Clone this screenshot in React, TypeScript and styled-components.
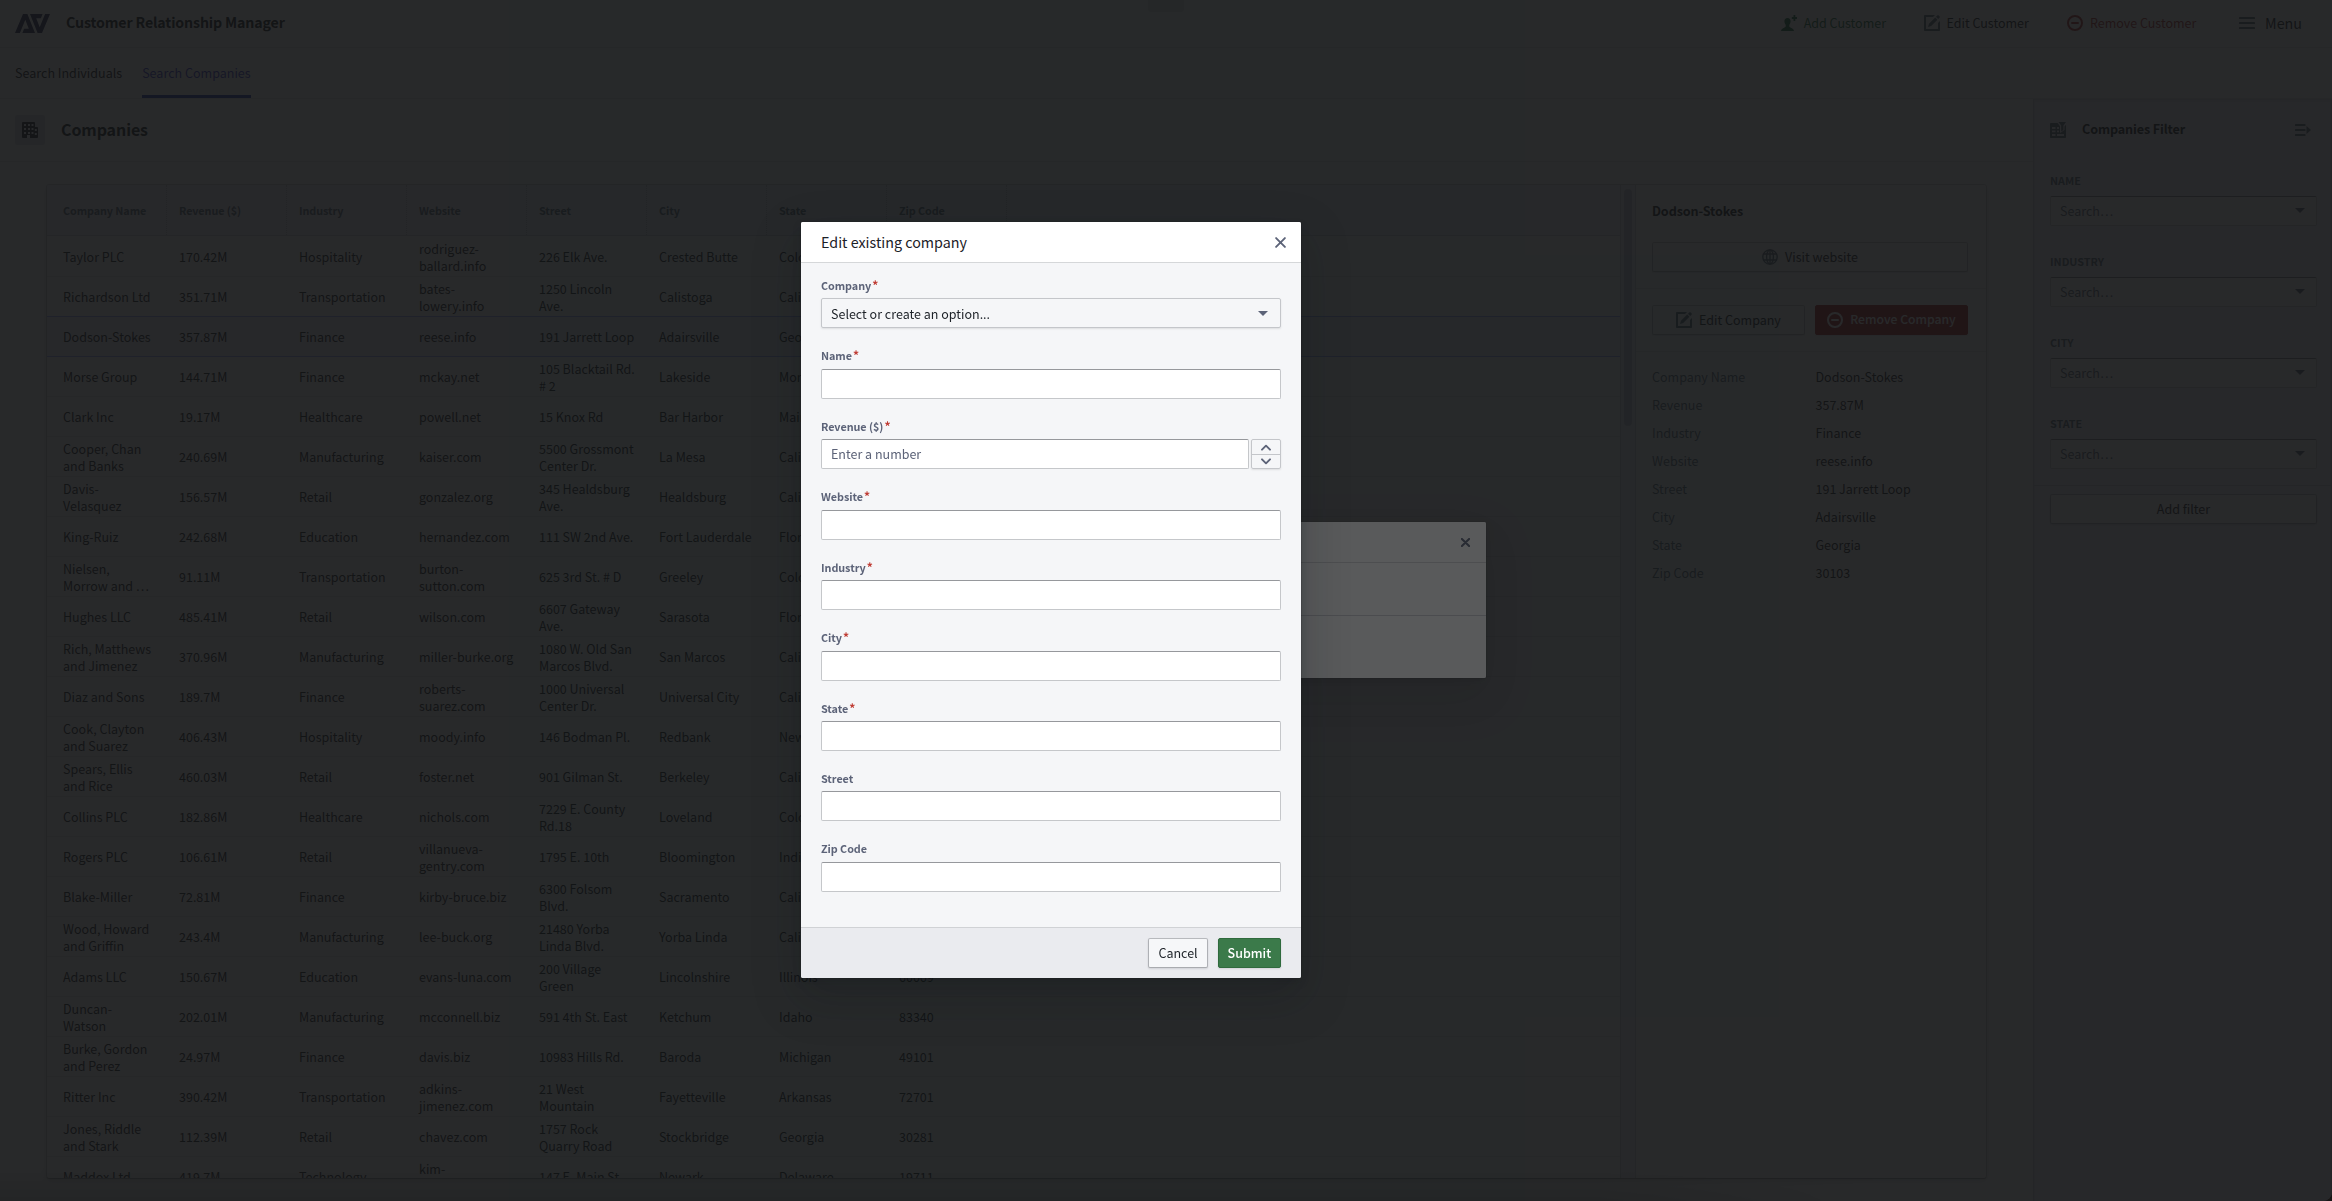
import React from "react";
import styled, { createGlobalStyle, css } from "styled-components";

const ink = "#1c2127";
const muted = "#5f6b7c";
const line = "rgba(17, 20, 24, 0.13)";
const shade = "#f2f2fc";

const GlobalStyle = createGlobalStyle`
  *, *::before, *::after { box-sizing: border-box; }
  body {
    margin: 0;
    overflow: hidden;
    background: #4a2418;
    color: ${ink};
    font-family: "Noto Sans CJK SC", "Noto Sans", sans-serif;
    font-size: 12.5px;
    line-height: 17px;
  }
`;

/* ---------- page shell ---------- */

const Page = styled.div`
  display: flex;
  flex-direction: column;
  height: 1201px;
  background: #fff;
  border-bottom-right-radius: 9px;
  overflow: hidden;
`;

const TopBar = styled.header`
  display: flex;
  align-items: center;
  height: 48px;
  padding: 0 30px 1px 15px;
  border-bottom: 1px solid ${line};
`;

const AppTitle = styled.h1`
  flex: 1;
  margin: 0 0 0 16px;
  padding-bottom: 2px;
  font-size: 14.2px;
  font-weight: 700;
  letter-spacing: -0.14px;
`;

const TopAction = styled.div<{ $tone?: string; $gap: number; $large?: boolean }>`
  display: flex;
  align-items: center;
  gap: ${(p) => (p.$large ? 10 : 7)}px;
  margin-left: ${(p) => p.$gap}px;
  color: ${(p) => p.$tone || ink};
  font-size: ${(p) => (p.$large ? 14.3 : 12.5)}px;
`;

const Lift = styled.span<{ $by?: number }>`
  padding-bottom: ${(p) => p.$by ?? 2}px;
`;

const Tabs = styled.nav`
  display: flex;
  gap: 20px;
  height: 51px;
  padding: 0 15px;
  border-bottom: 1px solid ${line};
`;

const Tab = styled.div<{ $active?: boolean }>`
  height: 50px;
  line-height: 49px;
  font-size: 12.54px;
  ${(p) =>
    p.$active &&
    css`
      color: #3c3ccf;
      border-bottom: 3px solid #2038b0;
    `}
`;

const Body = styled.div`
  display: flex;
  flex: 1;
  min-height: 0;
`;

const Main = styled.main`
  display: flex;
  flex-direction: column;
  width: 2033px;
`;

const SectionBar = styled.div`
  display: flex;
  align-items: center;
  gap: 16px;
  height: 63px;
  padding: 0 15px 0;
  border-bottom: 1px solid ${line};
`;

const IconTile = styled.div`
  display: flex;
  align-items: center;
  justify-content: center;
  width: 30px;
  height: 30px;
  border-radius: 2px;
  background: #dcdce6;
`;

const SectionTitle = styled.h2`
  margin: 0;
  padding-bottom: 2px;
  font-size: 16px;
  font-weight: 700;
  letter-spacing: -0.1px;
`;

const Card = styled.section`
  display: flex;
  width: 1939px;
  height: 993px;
  margin: 23px 0 0 47px;
  border-radius: 2px;
  box-shadow: 0 0 0 1px rgba(17, 20, 24, 0.15), 0 1px 1px rgba(17, 20, 24, 0.2), 0 2px 6px rgba(17, 20, 24, 0.2);
  overflow: hidden;
`;

/* ---------- table ---------- */

const Table = styled.div`
  width: 1573px;
  overflow: hidden;
`;

const columns = "repeat(8, 120px)";

const HeadRow = styled.div`
  display: grid;
  grid-template-columns: ${columns};
  height: 51px;
  background: ${shade};
  border-bottom: 1px solid ${line};
`;

const HeadCell = styled.div`
  display: flex;
  align-items: center;
  padding: 0 0 0 12px;
  border-right: 1px dotted rgba(17, 20, 24, 0.2);
  color: ${muted};
  font-size: 10.8px;
  font-weight: 700;
  letter-spacing: -0.08px;
  white-space: nowrap;
  &:first-child { padding-left: 16px; }
`;

const Row = styled.div<{ $selected?: boolean }>`
  display: grid;
  grid-template-columns: ${columns};
  height: 40px;
  border-bottom: 1px solid ${line};
  &:nth-child(2) { height: 41px; padding-top: 1px; }
  ${(p) =>
    p.$selected &&
    css`
      background: ${shade};
      border-bottom-color: #98a8ff;
      box-shadow: 0 -1px 0 #98a8ff;
    `}
`;

const Cell = styled.div`
  display: flex;
  align-items: center;
  padding: 0 0 0 12px;
  white-space: pre;
  &:first-child { padding-left: 16px; }
`;

const ScrollGutter = styled.div`
  width: 16px;
  padding: 4px 4px 0 3px;
  background: ${shade};
  border-left: 1px solid ${line};
  border-right: 1px solid ${line};
`;

const ScrollThumb = styled.div`
  width: 8px;
  height: 237px;
  border-radius: 4px;
  background: #c9c9d6;
`;

/* ---------- detail panel ---------- */

const Detail = styled.aside`
  flex: 1;
`;

const DetailSection = styled.div<{ $h: number }>`
  display: flex;
  align-items: flex-end;
  gap: 10px;
  height: ${(p) => p.$h}px;
  padding: 0 18px 16px 16px;
  border-bottom: 1px solid ${line};
`;

const DetailTitle = styled.h3`
  margin: 0;
  padding: 17px 16px 0;
  height: 41px;
  font-size: 12.6px;
  font-weight: 700;
  letter-spacing: -0.12px;
`;

const Button = styled.button<{ $kind?: "danger" | "success"; $pad?: number; $grow?: boolean }>`
  display: flex;
  align-items: center;
  justify-content: center;
  gap: 7px;
  height: 30px;
  flex: ${(p) => (p.$grow ? "1 1 0" : "none")};
  padding: 0 ${(p) => p.$pad ?? 0}px;
  border: 1px solid rgba(17, 20, 24, 0.2);
  border-radius: 2px;
  background: #f6f7f9;
  background-clip: padding-box;
  box-shadow: 0 1px 2px rgba(17, 20, 24, 0.12);
  color: ${ink};
  font: inherit;
  white-space: nowrap;
  ${(p) =>
    p.$kind === "success" &&
    css`
      background: #3b7a4a;
      border-color: #2f6a3d;
      color: #fff;
      font-weight: 500;
    `}
  ${(p) =>
    p.$kind === "danger" &&
    css`
      background: #a5242a;
      border-color: #a5242a;
      color: #fff;
      font-weight: 500;
      font-size: 12.2px;
    `}
`;

const Facts = styled.dl`
  display: grid;
  grid-template-columns: 163.5px 1fr;
  grid-auto-rows: 28px;
  align-items: center;
  margin: 10.4px 0 0 16px;
  dt { color: ${muted}; }
  dd { margin: 0; }
`;

/* ---------- filter sidebar ---------- */

const Sidebar = styled.aside`
  flex: 1;
  background: ${shade};
  border-left: 1px solid ${line};
  border-right: 1px solid ${line};
  box-shadow: inset 0 2px 3px rgba(17, 20, 24, 0.1);
`;

const SidebarHead = styled.div`
  display: flex;
  align-items: center;
  height: 61px;
  padding: 0 20px 0 16px;
  color: ${muted};
`;

const SidebarTitle = styled.h3`
  flex: 1;
  margin: 0 0 0 16px;
  padding-bottom: 2px;
  color: ${ink};
  font-size: 12.6px;
  font-weight: 700;
  letter-spacing: -0.12px;
`;

const FilterField = styled.div`
  height: 81px;
  padding: 13px 14px 0 16px;
`;

const FilterLabel = styled.div`
  height: 23px;
  color: ${muted};
  font-size: 10.8px;
  font-weight: 700;
  line-height: 15px;
`;

const SearchBox = styled.div`
  display: flex;
  align-items: center;
  justify-content: space-between;
  height: 30px;
  padding: 0 11px 1px 9px;
  border: 1px solid rgba(17, 20, 24, 0.2);
  border-top-color: rgba(17, 20, 24, 0.5);
  border-radius: 2px;
  background: #fff;
  color: ${muted};
`;

const Filters = styled.div`
  height: 326px;
  border-bottom: 1px solid ${line};
`;

const AddFilter = styled.div`
  display: flex;
  padding: 8px 14px 8px 16px;
`;

const Caret = styled.span`
  width: 0;
  height: 0;
  border: 5px solid transparent;
  border-top: 5px solid #5c6378;
  border-bottom: 0;
`;

/* ---------- overlays ---------- */

const Notch = styled.div`
  position: absolute;
  top: 0;
  left: 1148px;
  width: 36px;
  height: 12px;
  border-radius: 0 0 3px 3px;
  background: rgba(17, 20, 24, 0.12);
`;

const BottomFade = styled.div`
  position: absolute;
  left: 0;
  top: 1166px;
  width: 1880px;
  height: 35px;
  background: linear-gradient(to bottom, transparent, rgba(17, 20, 24, 0.2));
  mask-image: linear-gradient(to right, #000 85%, transparent);
`;

const Backdrop = styled.div<{ $shift?: number }>`
  position: fixed;
  inset: 0;
  display: flex;
  align-items: center;
  justify-content: center;
  padding: 0 ${(p) => p.$shift ?? 0}px 1px 0;
  background: rgba(19, 20, 21, 0.7);
`;

const Dialog = styled.div<{ $w: number; $h: number; $soft?: boolean }>`
  display: flex;
  flex-direction: column;
  width: ${(p) => p.$w}px;
  height: ${(p) => p.$h}px;
  border-radius: 2px;
  background: #f5f6f8;
  box-shadow: ${(p) =>
    p.$soft
      ? "0 0 0 1px rgba(17, 20, 24, 0.1), 0 4px 8px rgba(17, 20, 24, 0.15), 0 18px 46px 6px rgba(17, 20, 24, 0.12)"
      : "0 0 0 1px rgba(17, 20, 24, 0.1), 0 4px 8px rgba(17, 20, 24, 0.2), 0 18px 46px 6px rgba(17, 20, 24, 0.2)"};
  overflow: hidden;
`;

const DialogHead = styled.div<{ $end: number }>`
  display: flex;
  align-items: center;
  justify-content: space-between;
  height: 41px;
  padding: 0 ${(p) => p.$end}px 0 20px;
  border-bottom: 1px solid #d5d7d9;
  background: #fff;
  font-size: 14.3px;
`;

const QuietStrip = styled.div`
  height: 53px;
  border-bottom: 1px solid #cfd1d6;
  background: #fff;
`;

const QuietRest = styled.div`
  flex: 1;
  background: #fdfdff;
`;

const Form = styled.div`
  flex: 1;
  padding: 15px 20px 0;
`;

const Field = styled.div`
  height: 70.43px;
`;

const Label = styled.label`
  display: flex;
  height: 20.43px;
  color: #5c6378;
  font-size: 10.8px;
  font-weight: 700;
  letter-spacing: -0.05px;
  line-height: 15.43px;
`;

const Required = styled.span`
  margin: -1px 0 0 1px;
  color: #bf3b33;
  font-size: 12px;
`;

const Input = styled.div`
  display: flex;
  align-items: center;
  flex: 1;
  height: 30px;
  padding: 0 9px 1px;
  border: 1px solid #c5c7ca;
  border-top-color: #96989c;
  border-radius: 2px;
  background: #fff;
  color: #5c6378;
`;

const Select = styled.div`
  display: flex;
  align-items: center;
  justify-content: space-between;
  height: 30px;
  padding: 0 12px 0 9px;
  border: 1px solid #c4c6ca;
  border-radius: 2px;
  background: #f5f6f8;
  box-shadow: 0 1px 2px rgba(17, 20, 24, 0.1);
`;

const NumberRow = styled.div`
  display: flex;
  gap: 2px;
`;

const Stepper = styled.div`
  display: grid;
  grid-template-rows: 15px 1fr;
  width: 30px;
  height: 30px;
  border: 1px solid #c4c6ca;
  border-radius: 2px;
  box-shadow: 0 1px 2px rgba(17, 20, 24, 0.1);
  svg { margin: auto; }
`;

const StepUp = styled.div`
  display: flex;
  border-bottom: 1px solid #c4c6ca;
`;

const StepDown = styled.div`
  display: flex;
`;

const DialogFoot = styled.div`
  display: flex;
  align-items: flex-start;
  justify-content: flex-end;
  gap: 10px;
  height: 51px;
  padding: 10px 20px 0;
  border-top: 1px solid #d0d2d5;
  background: #eaebef;
`;

/* ---------- icons ---------- */

const IconBox = styled.svg`
  flex: none;
  width: 16px;
  height: 16px;
`;

const Icon = ({ children, color = "currentColor" }: { children: React.ReactNode; color?: string }) => (
  <IconBox viewBox="0 0 16 16" fill={color}>
    {children}
  </IconBox>
);

const logoHalf = "M0 19 8 0h4.400L20 19H7.400l1.700-4.200h4.700L10.300 5.800 4.900 19z";

const Logo = () => (
  <svg width="35" height="19" viewBox="0 0 35 19" fill="#2b2d5c">
    <path d={logoHalf} />
    <path transform="rotate(180 17.5 9.5)" d={logoHalf} />
  </svg>
);

const PersonPlus = () => (
  <Icon color="#1c6e42">
    <path d="M12.500 0h1.800v2.100h1.700v1.800h-1.700V6h-1.800V3.900h-1.700V2.100h1.700z" />
    <path d="M6.500 3C4.500 3 3.300 4.500 3.400 6.400c.1 1.600.7 2.700 1.300 3.400v1.500c0 .7-.6 1-1.500 1.400C1.600 13.400.2 14 0 16h13c-.2-2-1.600-2.600-3.200-3.300-.9-.4-1.500-.7-1.500-1.400V9.800c.6-.7 1.200-1.800 1.300-3.400C9.700 4.500 8.500 3 6.500 3z" />
  </Icon>
);

const EditIcon = () => (
  <Icon color={muted}>
    <path d="M1 0C.4 0 0 .4 0 1v14c0 .6.4 1 1 1h14c.6 0 1-.4 1-1V6l-2 2v6H2V2h7l2-2z" />
    <path d="M4 12l1-3.200L11.200 2.600l2.200 2.200L7.200 11zM12 1.800 13.300.5c.4-.4 1-.4 1.400 0l.8.8c.4.4.4 1 0 1.400L14.200 4z" />
  </Icon>
);

const RemoveIcon = () => (
  <Icon>
    <path fillRule="evenodd" d="M8 0a8 8 0 1 0 0 16A8 8 0 0 0 8 0zm0 2a6 6 0 1 1 0 12A6 6 0 0 1 8 2z" />
    <rect x="4" y="7" width="8" height="2" rx="1" />
  </Icon>
);

const MenuIcon = () => (
  <Icon color={muted}>
    <rect y="2" width="16" height="2" rx=".6" />
    <rect y="7" width="16" height="2" rx=".6" />
    <rect y="12" width="16" height="2" rx=".6" />
  </Icon>
);

const windows: [number, number][] = [
  [2, 2], [6, 2], [9.500, 2],
  [2, 6], [6, 6], [9.500, 6],
  [2, 10], [6, 10], [9.500, 10],
  [12.800, 7], [12.800, 11],
];

const Building = () => (
  <Icon color="#20242c">
    <rect width="13" height="16" rx="1" />
    <rect x="7" y="5" width="9" height="11" rx="1" />
    {windows.map(([x, y]) => (
      <rect key={`${x}-${y}`} x={x} y={y} width="2" height="2" fill="#f0f0fa" />
    ))}
    <rect x="5" y="13" width="3" height="3" fill="#f0f0fa" />
  </Icon>
);

const TableFilter = () => (
  <Icon color={muted}>
    <path d="M8.500 0H16l-2.600 3.600V8l-2.200 1.600v-6z" />
    <path fillRule="evenodd" d="M1 1h6.600L10 4.200v6.800l4.500-3V4.600L16 2.800V15c0 .6-.4 1-1 1H1c-.6 0-1-.4-1-1V2c0-.6.400-1 1-1zm1 4v2h3.500V5zm5 0v2h2V5zM2 8.500v1.800h3.500V8.500zm5 0v1.800h2V8.500zM2 12v2h3.500v-2zm5 0v2h7v-2z" />
  </Icon>
);

const Collapse = () => (
  <Icon color={muted}>
    <rect y="2" width="10.500" height="2" rx=".6" />
    <rect y="7" width="10.500" height="2" rx=".6" />
    <rect y="12" width="10.500" height="2" rx=".6" />
    <path d="M11.500 4v8L16 8z" />
  </Icon>
);

const Globe = () => (
  <Icon color="none">
    <g stroke={muted} strokeWidth="1.300">
      <circle cx="8" cy="8" r="7.200" />
      <ellipse cx="8" cy="8" rx="3.400" ry="7.200" />
      <path d="M8 1v14M1.500 5h13M1.500 11h13" />
    </g>
  </Icon>
);

const Cross = ({ size, weight }: { size: number; weight: number }) => (
  <svg width={size} height={size} viewBox="0 0 10 10" stroke="#5c6378" strokeWidth={weight} strokeLinecap="round">
    <path d="M1 1l8 8M9 1l-8 8" />
  </svg>
);

const Chevron = ({ down }: { down?: boolean }) => (
  <svg width="10" height="7" viewBox="0 0 10 7" fill="none" stroke="#5c6378" strokeWidth="1.900" strokeLinecap="round" strokeLinejoin="round">
    <path d={down ? "M1 1.300 5 5.300l4-4" : "M1 5.700 5 1.700l4 4"} />
  </svg>
);

/* ---------- data ---------- */

const headers = ["Company Name", "Revenue ($)", "Industry", "Website", "Street", "City", "State", "Zip Code"];

const rows: string[][] = [
  ["Taylor PLC", "170.42M", "Hospitality", "rodriguez-\nballard.info", "226 Elk Ave.", "Crested Butte", "Colorado", ""],
  ["Richardson Ltd", "351.71M", "Transportation", "bates-\nlowery.info", "1250 Lincoln\nAve.", "Calistoga", "California", ""],
  ["Dodson-Stokes", "357.87M", "Finance", "reese.info", "191 Jarrett Loop", "Adairsville", "Georgia", "30103"],
  ["Morse Group", "144.71M", "Finance", "mckay.net", "105 Blacktail Rd.\n# 2", "Lakeside", "Montana", ""],
  ["Clark Inc", "19.17M", "Healthcare", "powell.net", "15 Knox Rd", "Bar Harbor", "Maine", ""],
  ["Cooper, Chan\nand Banks", "240.69M", "Manufacturing", "kaiser.com", "5500 Grossmont\nCenter Dr.", "La Mesa", "California", ""],
  ["Davis-\nVelasquez", "156.57M", "Retail", "gonzalez.org", "345 Healdsburg\nAve.", "Healdsburg", "California", ""],
  ["King-Ruiz", "242.68M", "Education", "hernandez.com", "111 SW 2nd Ave.", "Fort Lauderdale", "Florida", ""],
  ["Nielsen,\nMorrow and …", "91.11M", "Transportation", "burton-\nsutton.com", "625 3rd St. # D", "Greeley", "Colorado", ""],
  ["Hughes LLC", "485.41M", "Retail", "wilson.com", "6607 Gateway\nAve.", "Sarasota", "Florida", ""],
  ["Rich, Matthews\nand Jimenez", "370.96M", "Manufacturing", "miller-burke.org", "1080 W. Old San\nMarcos Blvd.", "San Marcos", "California", ""],
  ["Diaz and Sons", "189.7M", "Finance", "roberts-\nsuarez.com", "1000 Universal\nCenter Dr.", "Universal City", "California", ""],
  ["Cook, Clayton\nand Suarez", "406.43M", "Hospitality", "moody.info", "146 Bodman Pl.", "Redbank", "New Jersey", ""],
  ["Spears, Ellis\nand Rice", "460.03M", "Retail", "foster.net", "901 Gilman St.", "Berkeley", "California", ""],
  ["Collins PLC", "182.86M", "Healthcare", "nichols.com", "7229 E. County\nRd.18", "Loveland", "Colorado", ""],
  ["Rogers PLC", "106.61M", "Retail", "villanueva-\ngentry.com", "1795 E. 10th", "Bloomington", "Indiana", ""],
  ["Blake-Miller", "72.81M", "Finance", "kirby-bruce.biz", "6300 Folsom\nBlvd.", "Sacramento", "California", ""],
  ["Wood, Howard\nand Griffin", "243.4M", "Manufacturing", "lee-buck.org", "21480 Yorba\nLinda Blvd.", "Yorba Linda", "California", ""],
  ["Adams LLC", "150.67M", "Education", "evans-luna.com", "200 Village\nGreen", "Lincolnshire", "Illinois", "60069"],
  ["Duncan-\nWatson", "202.01M", "Manufacturing", "mcconnell.biz", "591 4th St. East", "Ketchum", "Idaho", "83340"],
  ["Burke, Gordon\nand Perez", "24.97M", "Finance", "davis.biz", "10983 Hills Rd.", "Baroda", "Michigan", "49101"],
  ["Ritter Inc", "390.42M", "Transportation", "adkins-\njimenez.com", "21 West\nMountain", "Fayetteville", "Arkansas", "72701"],
  ["Jones, Riddle\nand Stark", "112.39M", "Retail", "chavez.com", "1757 Rock\nQuarry Road", "Stockbridge", "Georgia", "30281"],
  ["Maddox Ltd", "419.7M", "Technology", "kim-\n ", "147 E. Main St.", "Newark", "Delaware", "19711"],
];

const facts: [string, string][] = [
  ["Company Name", "Dodson-Stokes"],
  ["Revenue", "357.87M"],
  ["Industry", "Finance"],
  ["Website", "reese.info"],
  ["Street", "191 Jarrett Loop"],
  ["City", "Adairsville"],
  ["State", "Georgia"],
  ["Zip Code", "30103"],
];

type FieldSpec = { label: string; required?: boolean; kind?: "select" | "number" };

const fields: FieldSpec[] = [
  { label: "Company", required: true, kind: "select" },
  { label: "Name", required: true },
  { label: "Revenue ($)", required: true, kind: "number" },
  { label: "Website", required: true },
  { label: "Industry", required: true },
  { label: "City", required: true },
  { label: "State", required: true },
  { label: "Street" },
  { label: "Zip Code" },
];

const FieldControl = ({ kind }: { kind?: FieldSpec["kind"] }) => {
  if (kind === "select") {
    return (
      <Select>
        <Lift $by={0.6}>Select or create an option...</Lift>
        <Caret />
      </Select>
    );
  }
  if (kind === "number") {
    return (
      <NumberRow>
        <Input>Enter a number</Input>
        <Stepper>
          <StepUp><Chevron /></StepUp>
          <StepDown><Chevron down /></StepDown>
        </Stepper>
      </NumberRow>
    );
  }
  return <Input />;
};

export default function App() {
  return (
    <>
      <GlobalStyle />
      <Page>
        <TopBar>
          <Logo />
          <AppTitle>Customer Relationship Manager</AppTitle>
          <TopAction $tone="#1c6e42" $gap={0}><PersonPlus /><Lift>Add Customer</Lift></TopAction>
          <TopAction $gap={37.5}><EditIcon /><Lift>Edit Customer</Lift></TopAction>
          <TopAction $tone="#ac2f33" $gap={38}><RemoveIcon /><Lift>Remove Customer</Lift></TopAction>
          <TopAction $gap={42.7} $large><MenuIcon /><Lift>Menu</Lift></TopAction>
        </TopBar>
        <Tabs>
          <Tab>Search Individuals</Tab>
          <Tab $active>Search Companies</Tab>
        </Tabs>
        <Body>
          <Main>
            <SectionBar>
              <IconTile><Building /></IconTile>
              <SectionTitle>Companies</SectionTitle>
            </SectionBar>
            <Card>
              <Table>
                <HeadRow>
                  {headers.map((h) => <HeadCell key={h}>{h}</HeadCell>)}
                </HeadRow>
                {rows.map((r) => (
                  <Row key={r[0]} $selected={r[0] === "Dodson-Stokes"}>
                    {r.map((c, i) => <Cell key={i}>{c}</Cell>)}
                  </Row>
                ))}
              </Table>
              <ScrollGutter><ScrollThumb /></ScrollGutter>
              <Detail>
                <DetailTitle>Dodson-Stokes</DetailTitle>
                <DetailSection $h={63}>
                  <Button $grow><Globe /><Lift>Visit website</Lift></Button>
                </DetailSection>
                <DetailSection $h={63}>
                  <Button $grow><EditIcon /><Lift>Edit Company</Lift></Button>
                  <Button $grow $kind="danger"><RemoveIcon /><Lift $by={0.6}>Remove Company</Lift></Button>
                </DetailSection>
                <Facts>
                  {facts.map(([k, v]) => (
                    <React.Fragment key={k}>
                      <dt>{k}</dt>
                      <dd>{v}</dd>
                    </React.Fragment>
                  ))}
                </Facts>
              </Detail>
            </Card>
          </Main>
          <Sidebar>
            <SidebarHead>
              <TableFilter />
              <SidebarTitle>Companies Filter</SidebarTitle>
              <Collapse />
            </SidebarHead>
            <Filters>
              {["NAME", "INDUSTRY", "CITY", "STATE"].map((f) => (
                <FilterField key={f}>
                  <FilterLabel>{f}</FilterLabel>
                  <SearchBox>Search…<Caret /></SearchBox>
                </FilterField>
              ))}
            </Filters>
            <AddFilter><Button $grow><Lift>Add filter</Lift></Button></AddFilter>
          </Sidebar>
        </Body>
        <Notch />
        <BottomFade />
      </Page>

      <Backdrop>
        <Dialog $w={640} $h={156} $soft>
          <DialogHead $end={16}><span /><Cross size={9} weight={2.3} /></DialogHead>
          <QuietStrip />
          <QuietRest />
        </Dialog>
      </Backdrop>

      <Backdrop $shift={230}>
        <Dialog $w={500} $h={756}>
          <DialogHead $end={15}>
            <Lift>Edit existing company</Lift>
            <Cross size={11} weight={1.7} />
          </DialogHead>
          <Form>
            {fields.map((f) => (
              <Field key={f.label}>
                <Label>{f.label}{f.required && <Required>*</Required>}</Label>
                <FieldControl kind={f.kind} />
              </Field>
            ))}
          </Form>
          <DialogFoot>
            <Button $pad={9}><Lift>Cancel</Lift></Button>
            <Button $pad={8.9} $kind="success"><Lift>Submit</Lift></Button>
          </DialogFoot>
        </Dialog>
      </Backdrop>
    </>
  );
}
